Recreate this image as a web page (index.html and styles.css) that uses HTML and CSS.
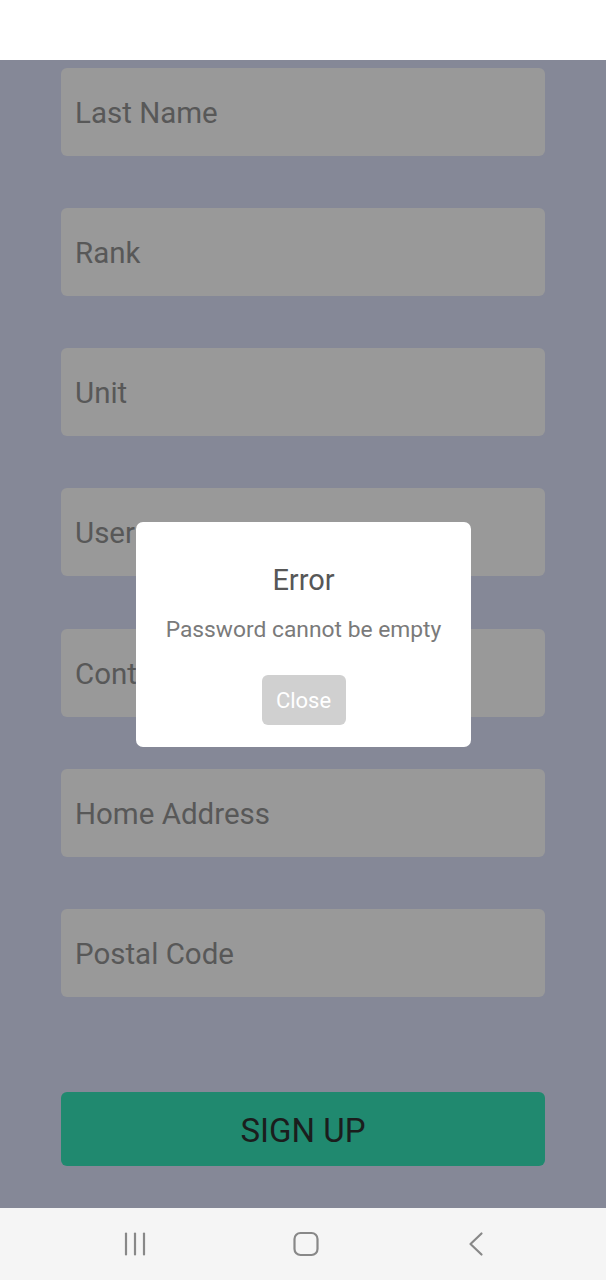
FILE: index.html
```html
<!DOCTYPE html>
<html>
<head>
<meta charset="utf-8">
<link rel="stylesheet" href="styles.css">
</head>
<body>
<div class="screen">
  <header class="topbar"></header>
  <main class="content">
    <div class="fields">
      <div class="field">Last Name</div>
      <div class="field">Rank</div>
      <div class="field">Unit</div>
      <div class="field">Username</div>
      <div class="field">Contact Number</div>
      <div class="field">Home Address</div>
      <div class="field">Postal Code</div>
    </div>
    <div class="signup">SIGN UP</div>
    <div class="dialog">
      <div class="dialog-title">Error</div>
      <div class="dialog-msg">Password cannot be empty</div>
      <div class="dialog-btn">Close</div>
    </div>
  </main>
  <nav class="navbar">
    <svg class="nav-icon" width="26" height="26" viewBox="0 0 26 26"><g stroke="#888888" stroke-width="2.2" stroke-linecap="round"><line x1="3" y1="2.5" x2="3" y2="23.5"/><line x1="12" y1="2.5" x2="12" y2="23.5"/><line x1="21" y1="2.5" x2="21" y2="23.5"/></g></svg>
    <svg class="nav-icon" width="26" height="26" viewBox="0 0 26 26"><rect x="1.5" y="2" width="23" height="22" rx="6" fill="none" stroke="#888888" stroke-width="2.2"/></svg>
    <svg class="nav-icon" width="26" height="26" viewBox="0 0 26 26"><polyline points="18.5,2.5 7.5,13 18.5,23.5" fill="none" stroke="#888888" stroke-width="2.2" stroke-linecap="round" stroke-linejoin="round"/></svg>
  </nav>
</div>
</body>
</html>
```

FILE: styles.css
```css
html, body {
  margin: 0;
  padding: 0;
}
body {
  width: 606px;
  height: 1280px;
  overflow: hidden;
  font-family: Roboto, "Noto Sans", sans-serif;
}
.screen {
  display: flex;
  flex-direction: column;
  height: 1280px;
}
.topbar {
  height: 60px;
  background: #ffffff;
  flex: none;
}
.content {
  position: relative;
  flex: 1;
  background: #858897;
  padding: 8px 61px 0 61px;
  display: flex;
  flex-direction: column;
}
.fields {
  display: flex;
  flex-direction: column;
  gap: 52.17px;
}
.field {
  height: 88px;
  background: #999999;
  border-radius: 6px;
  color: #585858;
  font-size: 29.5px;
  display: flex;
  align-items: center;
  padding-left: 14px;
  padding-top: 2px;
  box-sizing: border-box;
}
.signup {
  margin-top: 95px;
  height: 74px;
  background: #20896f;
  border-radius: 6px;
  color: #1b1d1d;
  font-size: 33px;
  display: flex;
  align-items: center;
  justify-content: center;
  padding-top: 3px;
  box-sizing: border-box;
}
.dialog {
  position: absolute;
  left: 136px;
  top: 462px;
  width: 335px;
  height: 225px;
  background: #ffffff;
  border-radius: 7px;
  display: flex;
  flex-direction: column;
  align-items: center;
  box-sizing: border-box;
  padding-top: 40px;
}
.dialog-title {
  font-size: 29px;
  color: #575757;
  line-height: 36px;
}
.dialog-msg {
  margin-top: 18px;
  font-size: 22.8px;
  color: #7a7a7a;
  line-height: 28px;
}
.dialog-btn {
  margin-top: 31px;
  width: 84px;
  height: 50px;
  background: #d0d0d0;
  border-radius: 6px;
  color: #ffffff;
  font-size: 22px;
  display: flex;
  align-items: center;
  justify-content: center;
}
.navbar {
  height: 72px;
  flex: none;
  background: #f5f5f5;
  display: flex;
  align-items: center;
  gap: 144px;
  padding-left: 123px;
}
.nav-icon {
  display: block;
}
```
